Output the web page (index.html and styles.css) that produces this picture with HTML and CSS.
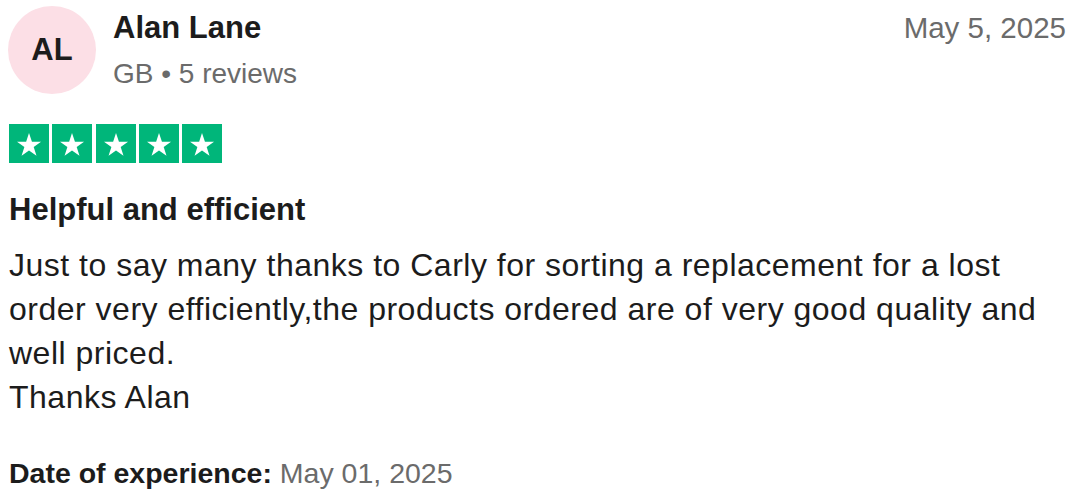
FILE: index.html
```html
<!DOCTYPE html>
<html lang="en">
<head>
<meta charset="utf-8">
<link rel="stylesheet" href="styles.css">
</head>
<body>
<article class="review">
  <header class="review-header">
    <div class="consumer">
      <div class="avatar">AL</div>
      <div class="consumer-info">
        <div class="name">Alan Lane</div>
        <div class="meta">GB • 5 reviews</div>
      </div>
    </div>
    <time class="date">May 5, 2025</time>
  </header>
  <div class="stars">
    <span class="star"><svg viewBox="0 0 24 24"><path d="M12 3.2l2.35 6.95h7.3l-5.9 4.3 2.25 6.95L12 17.1l-5.95 4.3 2.25-6.95-5.9-4.3h7.3z" fill="#fff"/></svg></span>
    <span class="star"><svg viewBox="0 0 24 24"><path d="M12 3.2l2.35 6.95h7.3l-5.9 4.3 2.25 6.95L12 17.1l-5.95 4.3 2.25-6.95-5.9-4.3h7.3z" fill="#fff"/></svg></span>
    <span class="star"><svg viewBox="0 0 24 24"><path d="M12 3.2l2.35 6.95h7.3l-5.9 4.3 2.25 6.95L12 17.1l-5.95 4.3 2.25-6.95-5.9-4.3h7.3z" fill="#fff"/></svg></span>
    <span class="star"><svg viewBox="0 0 24 24"><path d="M12 3.2l2.35 6.95h7.3l-5.9 4.3 2.25 6.95L12 17.1l-5.95 4.3 2.25-6.95-5.9-4.3h7.3z" fill="#fff"/></svg></span>
    <span class="star"><svg viewBox="0 0 24 24"><path d="M12 3.2l2.35 6.95h7.3l-5.9 4.3 2.25 6.95L12 17.1l-5.95 4.3 2.25-6.95-5.9-4.3h7.3z" fill="#fff"/></svg></span>
  </div>
  <h2 class="title">Helpful and efficient</h2>
  <p class="text">Just to say many thanks to Carly for sorting a replacement for a lost order very efficiently,the products ordered are of very good quality and well priced.<br>Thanks Alan</p>
  <p class="experience"><strong>Date of experience:</strong> <span>May 01, 2025</span></p>
</article>
</body>
</html>
```
FILE: styles.css
```css
* { box-sizing: border-box; }
body {
  margin: 0;
  background: #fff;
  font-family: "Liberation Sans", Arial, sans-serif;
  color: #1c1c1c;
}
.review {
  padding: 6px 2px 0 8px;
}
.review-header {
  display: flex;
  justify-content: space-between;
  align-items: flex-start;
}
.consumer {
  display: flex;
  align-items: flex-start;
  gap: 17px;
}
.avatar {
  width: 88px;
  height: 88px;
  border-radius: 50%;
  background: #fcdfe6;
  display: flex;
  align-items: center;
  justify-content: center;
  font-weight: 700;
  font-size: 31px;
  color: #1c1c1c;
}
.consumer-info {
  display: flex;
  flex-direction: column;
  padding-top: 2px;
}
.name {
  font-size: 31px;
  font-weight: 700;
  line-height: 40px;
}
.meta {
  font-size: 28px;
  line-height: 40px;
  color: #6b6b6b;
  margin-top: 6px;
}
.date {
  font-size: 29.5px;
  line-height: 40px;
  color: #6b6b6b;
  margin-top: 2px;
}
.stars {
  display: flex;
  gap: 3.3px;
  margin-top: 30px;
  margin-left: 1px;
}
.star {
  width: 40px;
  height: 39px;
  background: #00b67a;
  display: flex;
  align-items: center;
  justify-content: center;
}
.star svg {
  width: 30px;
  height: 30px;
}
.title {
  margin: 25px 0 0 1px;
  font-size: 31px;
  font-weight: 700;
  line-height: 44px;
}
.text {
  margin: 11px 0 0 1px;
  font-size: 32px;
  line-height: 44px;
  letter-spacing: 0.5px;
}
.experience {
  margin: 34px 0 0 1px;
  font-size: 28.5px;
  line-height: 40px;
}
.experience span {
  color: #6b6b6b;
}
```
